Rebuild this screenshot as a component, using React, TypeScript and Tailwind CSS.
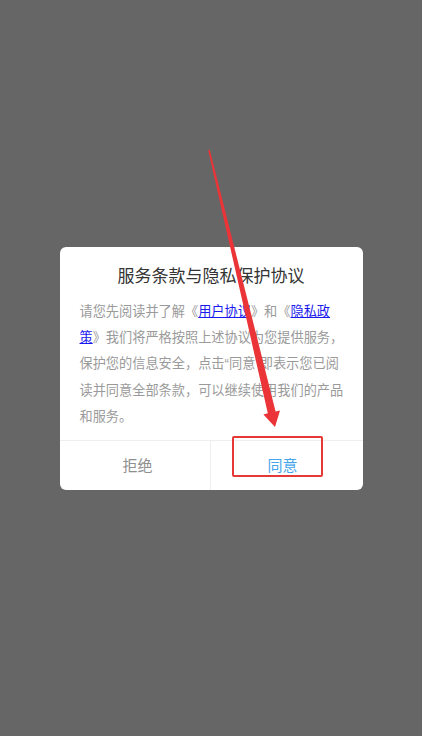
export default function App() {
  const link = "text-[#1a1aee] underline";
  return (
    <div
      className="relative h-[736px] w-[422px] overflow-hidden bg-[#666666]"
      style={{ fontFamily: '"Noto Sans CJK SC", "Noto Sans", sans-serif' }}
    >
      <div className="pt-[247px]">
        <div className="mx-auto w-[303px] rounded-md bg-white">
          <h2 className="pt-[16px] text-center text-[17px] leading-[24px] text-[#333333]">
            服务条款与隐私保护协议
          </h2>
          <p className="mt-[11px] px-[20px] pb-[11px] text-[13.2px] leading-[26px] text-[#9a9a9a] whitespace-nowrap">
            请您先阅读并了解《<a className={link}>用户协议</a>》和《<a className={link}>隐私政</a>
            <br />
            <a className={link}>策</a>》我们将严格按照上述协议为您提供服务，
            <br />
            保护您的信息安全，点击<span className="font-['Liberation_Sans']">“</span>同意<span className="font-['Liberation_Sans']">”</span>即表示您已阅
            <br />
            读并同意全部条款，可以继续使用我们的产品
            <br />
            和服务。
          </p>
          <div className="flex h-[50px] border-t border-[#eeeeee]">
            <button type="button" className="flex-1 pl-[6px] text-[15px] text-[#8f8f8f]">
              拒绝
            </button>
            <button type="button" className="flex-1 border-l border-[#eeeeee] pr-[8px] text-[15px] text-[#45a6ea]">
              同意
            </button>
          </div>
        </div>
      </div>

      {/* annotation overlay */}
      <div className="absolute left-[232px] top-[436px] h-[41px] w-[91px] rounded-[2px] border-2 border-[#e53935]" />
      <svg className="pointer-events-none absolute inset-0" width="422" height="736" viewBox="0 0 422 736">
        <polygon
          points="208.2,150.2 209.8,149.8 275.6,411.5 280,410.4 275,427 263.4,414.4 267.8,413.3"
          fill="#ea3437"
        />
      </svg>
    </div>
  );
}
